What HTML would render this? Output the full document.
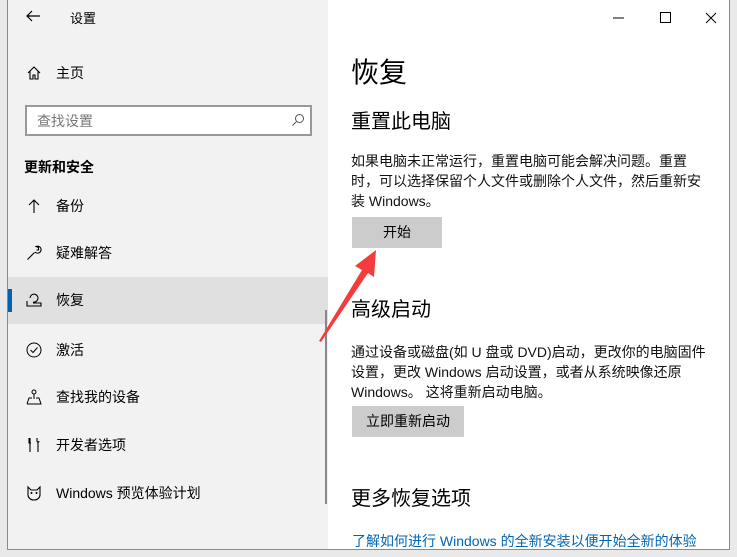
<!DOCTYPE html>
<html><head><meta charset="utf-8"><style>
*{margin:0;padding:0;box-sizing:border-box}
body{width:737px;height:557px;overflow:hidden;background:#e9e9e9;font-family:"Liberation Sans","Noto Sans CJK SC",sans-serif;color:#000;position:relative}
.win{position:absolute;left:7px;top:0;width:723px;height:550px;border:1px solid #8a8a8a;border-top:none;background:#fff;overflow:hidden}
.left{position:absolute;left:0;top:0;width:320px;height:549px;background:#f2f2f2}
.abs{position:absolute;white-space:nowrap}
.nav{position:absolute;left:0;width:320px;height:47px;font-size:14px;line-height:47px}
.nav .t{position:absolute;left:48px}
.nav svg{position:absolute;left:18px;top:15px}
.p{font-size:14px;line-height:20px;color:#111}
.btn{position:absolute;background:#ccc;font-size:14px;text-align:center;color:#000}
</style></head><body>
<div class="win">
<div class="left">
 <svg class="abs" style="left:17px;top:9px" width="16" height="14"><path d="M15 7H2M7 2L2 7l5 5" stroke="#000" stroke-width="1.2" fill="none"/></svg>
 <div class="abs" style="left:62px;top:8px;font-size:13px">设置</div>
 <div class="nav" style="top:50px"><svg width="16" height="16"><path d="M2 8L8 2l6 6M4 6v8h3v-4h2v4h3V6" stroke="#000" stroke-width="1.1" fill="none"/></svg><span class="t">主页</span></div>
 <div class="abs" style="left:17px;top:105px;width:287px;height:31px;border:2px solid #999;background:#fff"></div>
 <div class="abs" style="left:29px;top:111px;font-size:14px;color:#777">查找设置</div>
 <svg class="abs" style="left:283px;top:113px" width="14" height="14"><circle cx="8.5" cy="5.5" r="4" stroke="#555" fill="none"/><path d="M5.5 8.5L1.5 12.5" stroke="#555"/></svg>
 <div class="abs" style="left:16px;top:157px;font-size:14px;font-weight:bold">更新和安全</div>
 <div class="nav" style="top:183px"><svg width="16" height="16"><path d="M8 15V2M3 7l5-5 5 5" stroke="#000" stroke-width="1.1" fill="none"/></svg><span class="t">备份</span></div>
 <div class="nav" style="top:230px"><svg width="16" height="16"><path d="M1.5 14.5l7-7M9 7a3.5 3.5 0 1 0 1-5.5l2.5 1v2.5l-2 0" stroke="#000" stroke-width="1.1" fill="none"/></svg><span class="t">疑难解答</span></div>
 <div class="nav" style="top:277px;background:#e0e0e0"><div class="abs" style="left:0;top:12px;width:4px;height:23px;background:#0063b1"></div><svg width="16" height="16"><path d="M4 6a4 4 0 1 1 3 4M1 9v5h14v-3H7" stroke="#000" stroke-width="1.1" fill="none"/></svg><span class="t">恢复</span></div>
 <div class="nav" style="top:327px"><svg width="16" height="16"><circle cx="8" cy="8" r="7" stroke="#000" fill="none"/><path d="M4.5 8l2.5 2.5 4.5-5" stroke="#000" fill="none"/></svg><span class="t">激活</span></div>
 <div class="nav" style="top:374px"><svg width="16" height="16"><circle cx="8" cy="3" r="2" stroke="#000" fill="none"/><path d="M8 5v5M1 15l2-6h3M10 9h3l2 6H1" stroke="#000" fill="none"/></svg><span class="t">查找我的设备</span></div>
 <div class="nav" style="top:422px"><svg width="16" height="16"><path d="M4 1v5M3 1v5h2M4 6v9M11 1v3a1 1 0 0 0 2 0M12 5v10" stroke="#000" stroke-width="1.1" fill="none"/></svg><span class="t">开发者选项</span></div>
 <div class="nav" style="top:470px"><svg width="16" height="16"><path d="M2 2l3 3h6l3-3v8a6 5 0 0 1-12 0z" stroke="#000" stroke-width="1.1" fill="none"/><circle cx="5.5" cy="8" r="1" fill="#000"/><circle cx="10.5" cy="8" r="1" fill="#000"/></svg><span class="t">Windows 预览体验计划</span></div>
 <div class="abs" style="left:317px;top:310px;width:2px;height:194px;background:#888"></div>
</div>
<svg class="abs" style="left:605px;top:12px" width="110" height="12"><path d="M0 6h11" stroke="#000"/><rect x="47.5" y="0.5" width="10" height="10" stroke="#000" fill="none"/><path d="M93 1l10 10M103 1L93 11" stroke="#000"/></svg>
<div class="abs" style="left:343px;top:54px;font-size:28px;line-height:38px">恢复</div>
<div class="abs" style="left:343px;top:108px;font-size:20px;line-height:28px">重置此电脑</div>
<div class="abs p" style="left:343px;top:151px">如果电脑未正常运行，重置电脑可能会解决问题。重置<br>时，可以选择保留个人文件或删除个人文件，然后重新安<br>装 Windows。</div>
<div class="btn" style="left:344px;top:217px;width:90px;height:31px;line-height:31px">开始</div>
<div class="abs" style="left:343px;top:296px;font-size:20px;line-height:28px">高级启动</div>
<div class="abs p" style="left:343px;top:342px">通过设备或磁盘(如 U 盘或 DVD)启动，更改你的电脑固件<br>设置，更改 Windows 启动设置，或者从系统映像还原<br>Windows。 这将重新启动电脑。</div>
<div class="btn" style="left:344px;top:406px;width:112px;height:31px;line-height:31px">立即重新启动</div>
<div class="abs" style="left:343px;top:485px;font-size:20px;line-height:28px">更多恢复选项</div>
<div class="abs p" style="left:344px;top:531px;color:#0066b4">了解如何进行 Windows 的全新安装以便开始全新的体验</div>
<svg class="abs" style="left:310px;top:246px" width="70" height="100"><polygon points="1,95 44,24 37,20 58,4 56,31 50,27 3,96" fill="#f53c3c"/></svg>
</div>
</body></html>
